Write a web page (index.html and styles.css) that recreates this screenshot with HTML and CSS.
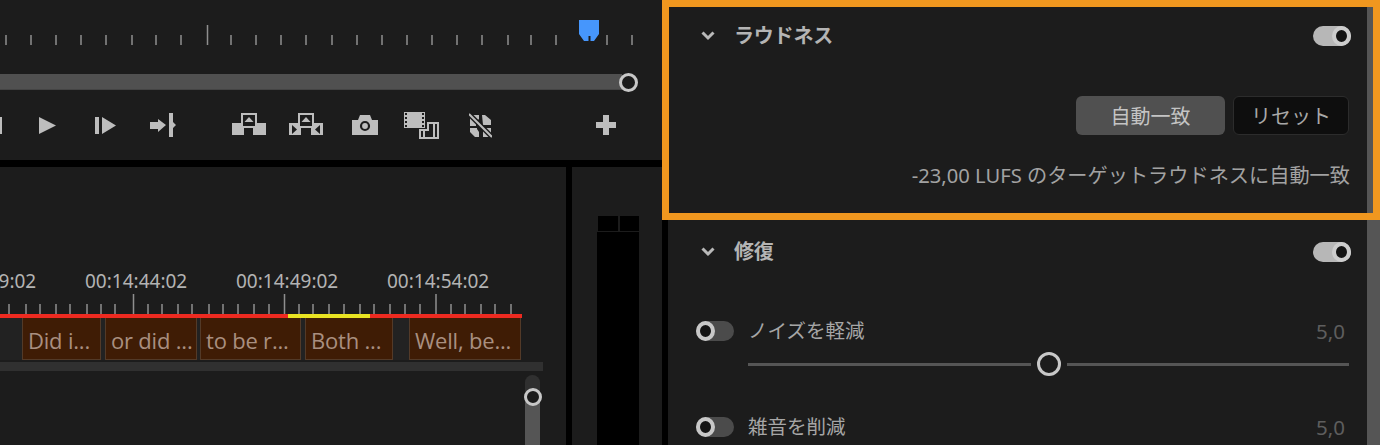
FILE: index.html
```html
<!DOCTYPE html>
<html lang="ja">
<head>
<meta charset="utf-8">
<title>ラウドネス</title>
<link rel="stylesheet" href="styles.css">
</head>
<body>
<div class="app">
  <div class="left">
    <section class="monitor">
      <svg class="ruler" width="662" height="60" viewBox="0 0 662 60">
        <path class="tick" d="M6 35v10M31 35v10M56 35v10M81 35v10M106 35v10M132 35v10M156 35v10M181 35v10M231 35v10M256 35v10M281 35v10M306 35v10M332 35v10M357 35v10M382 35v10M407 35v10M432 35v10M457 35v10M482 35v10M508 35v10M531 35v10M556 35v10M607 35v10M632 35v10"/>
        <path class="tick" d="M207.500 25v20"/>
        <path class="playhead" d="M579 20h20v14l-5 7h-3.500v-5h-2v5H584l-5-7z"/>
      </svg>
      <div class="zoom-row">
        <div class="zoom-track"></div>
        <span class="ring"></span>
      </div>
      <div class="transport">
        <svg class="ico" width="2" height="30"><rect y="7" width="2" height="17"/></svg>
        <svg class="ico m-play" width="17" height="30"><path d="M0 7l17 8.500L0 24z"/></svg>
        <svg class="ico m-step" width="21" height="30"><path d="M0 7h4v17H0zM7 7l14 8.500L7 24z"/></svg>
        <svg class="ico m-ins" width="26" height="30"><path d="M0 12h8V9l8 6-8 7v-3H0zM19 3h4v9l3 3-3 3v9h-4z"/></svg>
        <svg class="ico m-lift" width="34" height="30"><path d="M0 13h12v12H0zM21 13h13v12H21zM9 3h16v15H9z"/><path class="hole" d="M11 5h12v11H11z"/><path d="M17 7l4.500 5h-9z"/></svg>
        <svg class="ico m-ext" width="34" height="30"><path d="M0 13h12v12H0zM22 13h12v12H22zM9 3h16v15H9z"/><path class="hole" d="M11 5h12v11H11zM3 15l5 4.500L3 24zM31 15l-5 4.500 5 4.500z"/><path d="M17 7l4.500 5h-9z"/></svg>
        <svg class="ico m-cam" width="26" height="30"><path d="M0 10h6l2-5h10l2 5h6v15H0z"/><circle class="lens" cx="13" cy="16" r="4"/></svg>
        <svg class="ico m-film" width="35" height="30"><path d="M0 2h21v16H0z"/><path class="hole" d="M1 3h2v2H1zM1 7h2v2H1zM1 11h2v2H1zM1 15h2v2H1zM18 3h2v2h-2zM18 7h2v2h-2zM18 11h2v2h-2zM18 15h2v2h-2z"/><path d="M23 12h12v17H15V19h8zm-6 9v6h2v-6zm4 0v6h8V14h-4v7zm10-7v13h2V14z"/></svg>
        <svg class="ico m-sync" width="23" height="30"><path d="M1 5h9v4l-3 3v4H1zM13 5h3l6 5v5h-8zM1 18h7v1l2 3v5H6l-5-5zM14 18h8v9h-8z"/><path class="slash" d="M0 4l23 23"/><path class="slash-light" d="M0 4l23 23"/></svg>
        <svg class="ico m-plus" width="20" height="30"><path d="M7 5h6v7h7v6h-7v7H7v-7H0v-6h7z"/></svg>
      </div>
    </section>
    <div class="lower">
      <section class="timeline">
        <div class="times">
          <span class="time">00:14:39:02</span>
          <span class="time">00:14:44:02</span>
          <span class="time">00:14:49:02</span>
          <span class="time">00:14:54:02</span>
        </div>
        <svg class="tl-ticks" width="522" height="20" viewBox="0 0 522 20">
          <path class="tick" d="M9 10v10M26 10v10M40 10v10M56 10v10M70 10v10M87 10v10M101 10v10M115 10v10M148 10v10M162 10v10M178 10v10M192 10v10M209 10v10M223 10v10M238 10v10M254 10v10M269 10v10M299 10v10M313 10v10M329 10v10M344 10v10M360 10v10M374 10v10M390 10v10M405 10v10M420 10v10M451 10v10M465 10v10M481 10v10M495 10v10M511 10v10"/>
          <path class="tick" d="M133.500 0v20M284.500 0v20M436 0v20"/>
        </svg>
        <div class="render-bar">
          <span class="seg-red a"></span><span class="seg-yellow"></span><span class="seg-red b"></span>
        </div>
        <div class="clips">
          <div class="clip w1">Did i...</div>
          <div class="clip w2">or did ...</div>
          <div class="clip w3">to be r...</div>
          <div class="clip w4">Both ...</div>
          <div class="clip w5">Well, be...</div>
        </div>
        <div class="h-bar"></div>
        <div class="v-scroll"><span class="ring small"></span></div>
      </section>
      <section class="meter">
        <div class="meter-head"><span></span><span></span></div>
        <div class="meter-body"></div>
      </section>
    </div>
  </div>
  <div class="right">
    <div class="panel">
      <section class="group loudness">
        <header class="head">
          <svg class="chev" width="14" height="10" viewBox="0 0 14 10"><path d="M1.500 1.500L7 7l5.500-5.500"/></svg>
          <h2>ラウドネス</h2>
          <span class="toggle on"><i></i></span>
        </header>
        <div class="btns">
          <span class="btn primary">自動一致</span>
          <span class="btn dark">リセット</span>
        </div>
        <p class="desc">-23,00 LUFS のターゲットラウドネスに自動一致</p>
      </section>
      <section class="group repair">
        <header class="head">
          <svg class="chev" width="14" height="10" viewBox="0 0 14 10"><path d="M1.500 1.500L7 7l5.500-5.500"/></svg>
          <h2>修復</h2>
          <span class="toggle on"><i></i></span>
        </header>
        <div class="row first">
          <span class="toggle"><i></i></span>
          <span class="label">ノイズを軽減</span>
          <span class="value">5,0</span>
        </div>
        <div class="slider">
          <span class="s-track"></span>
          <span class="s-knob"></span>
          <span class="s-track"></span>
        </div>
        <div class="row second">
          <span class="toggle"><i></i></span>
          <span class="label">雑音を削減</span>
          <span class="value">5,0</span>
        </div>
      </section>
    </div>
    <div class="scrollbar"></div>
    <div class="highlight"></div>
  </div>
</div>
</body>
</html>
```
FILE: styles.css
```css
* { box-sizing: border-box; }
html, body { margin: 0; padding: 0; background: #000; }
body { width: 1380px; height: 445px; overflow: hidden; font-family: "Noto Sans", "Noto Sans CJK JP", sans-serif; }
.app { display: flex; width: 1380px; height: 445px; }

.left { width: 662px; display: flex; flex-direction: column; }
.monitor { height: 160px; background: #1c1c1c; }
.ruler { display: block; }
.tick { stroke: #8e8e8e; stroke-width: 1.5; fill: none; }
.playhead { fill: #4696fc; }

.zoom-row { height: 18px; margin-top: 13px; display: flex; align-items: center; position: relative; }
.zoom-track { width: 622px; height: 16px; background: #505050; border-bottom: 1px solid #444; }
.ring { width: 19px; height: 19px; border-radius: 50%; background: #1c1c1c; border: 3.5px solid #c8c8c8; margin-left: -3px; flex: none; }

.transport { display: flex; align-items: center; height: 30px; margin-top: 19px; }
.ico { display: block; flex: none; fill: #bdbdbd; }
.ico .hole { fill: #1c1c1c; }
.ico .lens { fill: none; stroke: #1c1c1c; stroke-width: 2.2; }
.ico .slash { stroke: #1c1c1c; stroke-width: 5; fill: none; }
.ico .slash-light { stroke: #bdbdbd; stroke-width: 2; fill: none; }
.m-play { margin-left: 37px; }
.m-step { margin-left: 39px; }
.m-ins { margin-left: 34px; }
.m-lift { margin-left: 56px; }
.m-ext { margin-left: 23px; }
.m-cam { margin-left: 29px; }
.m-film { margin-left: 26px; }
.m-sync { margin-left: 30px; }
.m-plus { margin-left: 104px; }

.lower { display: flex; margin-top: 7px; flex: 1; min-height: 0; }
.timeline { width: 566px; background: #1c1c1c; overflow: hidden; padding-top: 101px; }
.times { display: flex; gap: 49px; margin-left: -66px; height: 26px; }
.time { width: 102px; flex: none; font-size: 19px; line-height: 26px; color: #b3b3b3; white-space: nowrap; text-align: center; }
.tl-ticks { display: block; }
.render-bar { display: flex; height: 4px; width: 522px; }
.seg-red { background: #ee2a20; }
.seg-red.a { width: 288px; }
.seg-red.b { width: 152px; }
.seg-yellow { width: 82px; background: #e9e422; }

.clips { display: flex; width: 521px; height: 42px; padding: 0 0 0 22px; background: #222; }
.clip { background: #3f1c05; border: 1px solid #533a28; border-top: 0; font-family: "Open Sans", "Noto Sans", sans-serif; font-size: 22px; line-height: 44px; letter-spacing: -.2px; color: #a98f80; padding-left: 5px; white-space: nowrap; overflow: hidden; }
.w1 { width: 79px; }
.w2 { width: 92px; margin-left: 4px; }
.w3 { width: 101px; margin-left: 3px; }
.w4 { width: 88px; margin-left: 4px; }
.w5 { width: 112px; margin-left: 16px; }

.h-bar { width: 543px; height: 9px; margin-top: 2px; background: #303030; }
.v-scroll { position: relative; width: 15px; height: 80px; margin: 4px 0 0 525px; background: linear-gradient(#303030 22px, #555 22px); border-radius: 8px 8px 0 0; }
.ring.small { position: absolute; left: -1.500px; top: 13px; width: 18px; height: 18px; margin: 0; border-width: 3.500px; }

.meter { width: 90px; margin-left: 6px; background: #1c1c1c; padding: 49px 23px 0 25px; display: flex; flex-direction: column; }
.meter-head { display: flex; gap: 2px; height: 15px; padding-left: 1px; }
.meter-head span { flex: 1; background: #000; }
.meter-body { flex: 1; margin-top: 1px; background: #000; }

.right { width: 718px; position: relative; display: flex; padding-left: 6px; }
.panel { width: 699px; background: #1c1c1c; padding: 0 16px 0 28px; overflow: hidden; }
.scrollbar { width: 13px; background: #555; }
.highlight { position: absolute; left: 0; top: 0; width: 718px; height: 220px; border: 7px solid #f0971f; }

.group.loudness { height: 232px; padding-top: 16px; }
.head { display: flex; align-items: center; height: 40px; }
.chev { margin: 0 19px 0 5px; flex: none; fill: none; stroke: #b9b9b9; stroke-width: 3; }
.head h2 { margin: 0; font-size: 20px; font-weight: 700; color: #b4b4b4; line-height: 40px; letter-spacing: -.2px; }
.toggle { width: 38px; height: 20px; border-radius: 10px; background: #4b4b4b; display: flex; justify-content: flex-start; flex: none; }
.toggle i { width: 19px; height: 20px; border-radius: 50%; background: #141414; border: 4px solid #c8c8c8; display: block; }
.toggle.on { background: #b7b7b7; justify-content: flex-end; margin-left: auto; }
.toggle.on i { border-color: #cdcdcd; }

.btns { display: flex; justify-content: flex-end; gap: 8px; margin-top: 40px; padding-right: 2px; }
.btn { height: 39px; border-radius: 6px; display: flex; align-items: center; justify-content: center; font-size: 20px; color: #c4c4c4; }
.primary { width: 149px; background: #505050; }
.dark { width: 116px; background: #0e0e0e; border: 1px solid #2c2c2c; color: #a8a8a8; }
.desc { margin: 27px 0 0; font-size: 20.200px; line-height: 26px; text-align: right; color: #a2a2a2; padding-right: 1px; white-space: nowrap; }

.row { display: flex; align-items: center; height: 24px; }
.row.first { margin-top: 47px; }
.row.second { margin-top: 39px; }
.label { margin-left: 14px; font-size: 19.500px; color: #a6a6a6; line-height: 24px; }
.value { margin-left: auto; margin-right: 6px; font-size: 20.500px; line-height: 24px; color: #5e5e5e; }
.slider { display: flex; align-items: center; gap: 6px; height: 24px; margin: 9px 2px 0 52px; }
.s-track { flex: 1; height: 3px; background: #555; }
.s-knob { width: 24px; height: 24px; border-radius: 50%; border: 3.500px solid #c8c8c8; background: #1c1c1c; flex: none; }
```
